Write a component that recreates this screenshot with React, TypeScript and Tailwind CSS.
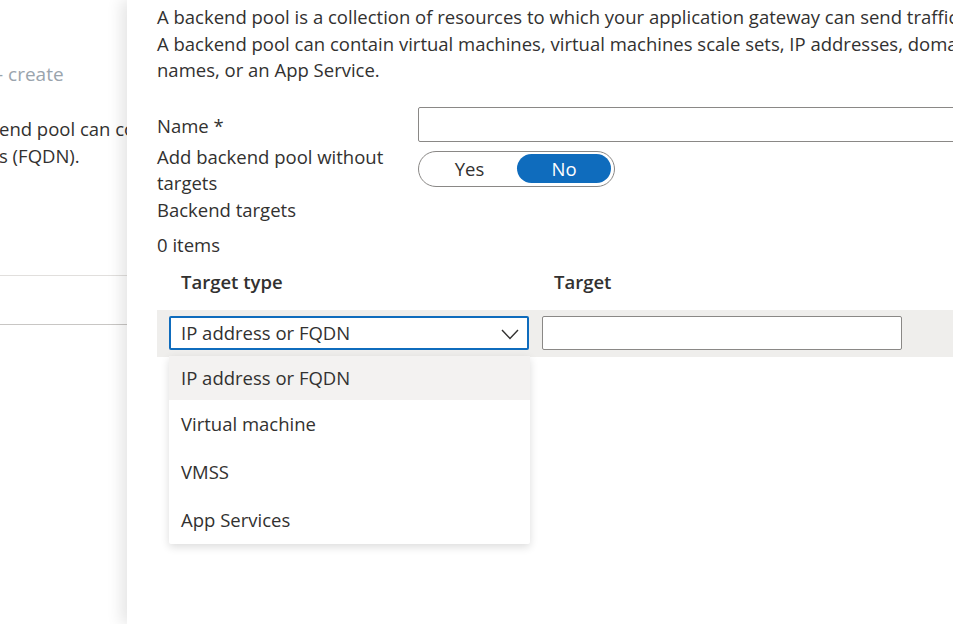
import React from "react";

export default function App() {
  const font = { fontFamily: '"Open Sans", "Noto Sans", "Liberation Sans", sans-serif' };
  return (
    <div
      className="w-[953px] h-[624px] flex overflow-hidden bg-white text-[#323130] text-[18.5px]"
      style={font}
    >
      {/* Left, background blade */}
      <div className="w-[127px] shrink-0 h-full overflow-hidden bg-white flex flex-col">
        <div className="h-[60px]" />
        <div className="whitespace-nowrap ml-[-3px] text-[19px] leading-[28px] text-[#9aa4ad]">
          - create
        </div>
        <div className="h-[27px]" />
        <div className="whitespace-nowrap ml-[-1px] leading-[27px]">end pool can contain</div>
        <div className="whitespace-nowrap ml-[-1px] leading-[27px]">s (FQDN).</div>
        <div className="h-[106px]" />
        <div className="h-px bg-[#e1dfdd] w-full" />
        <div className="h-[48px]" />
        <div className="h-px bg-[#c8c6c4] w-full" />
      </div>

      {/* Right, active blade */}
      <div className="relative flex-1 h-full bg-white shadow-[-6px_0_14px_rgba(0,0,0,0.10)]">
        <div className="pl-[30px] pt-[4px]">
          <p className="leading-[26.5px] whitespace-nowrap">
            A backend pool is a collection of resources to which your application gateway can send traffic.
            <br />
            A backend pool can contain virtual machines, virtual machines scale sets, IP addresses, domain
            <br />
            names, or an App Service.
          </p>

          {/* Name */}
          <div className="flex items-center mt-[23px] h-[35px]">
            <div className="w-[261px] shrink-0 leading-[26px] translate-y-[2px]">Name *</div>
            <div className="flex-1 h-[35px] border border-[#8a8886] rounded-[2px] mr-[-10px]" />
          </div>

          {/* Toggle row */}
          <div className="flex mt-[2px]">
            <div className="w-[261px] shrink-0 leading-[26px] pr-[20px]">
              Add backend pool without targets
            </div>
            <div className="mt-[7px] w-[197px] h-[36px] rounded-full border border-[#8a8886] flex items-center px-[3px]">
              <div className="flex-1 text-center">Yes</div>
              <div className="w-[94px] h-[29px] rounded-full bg-[#0f6cbd] text-white flex items-center justify-center">
                No
              </div>
            </div>
          </div>

          <div className="leading-[26px] mt-[1px]">Backend targets</div>
          <div className="leading-[26px] mt-[9px]">0 items</div>

          {/* Table header */}
          <div className="flex mt-[11px] h-[26px] items-center font-semibold">
            <div className="w-[397px] pl-[24px]">Target type</div>
            <div>Target</div>
          </div>
        </div>

        {/* Row band */}
        <div className="ml-[30px] mt-[15px] h-[47px] bg-[#efeeec] flex items-center pl-[12px] gap-[13px]">
          <div className="relative w-[360px] h-[34px] border-2 border-[#0f6cbd] rounded-[2px] bg-white flex items-center pl-[10px]">
            <span>IP address or FQDN</span>
            <svg
              className="absolute right-[8px] top-[11px]"
              width="18"
              height="11"
              viewBox="0 0 18 11"
              fill="none"
            >
              <polyline points="1,1 9,9.5 17,1" stroke="#323130" strokeWidth="1.4" />
            </svg>
          </div>
          <div className="w-[360px] h-[34px] border border-[#8a8886] rounded-[2px] bg-white" />
        </div>

        {/* Dropdown */}
        <div className="absolute left-[42px] top-[356px] w-[361px] bg-white rounded-b-[2px] shadow-[0_3px_8px_rgba(0,0,0,0.14)]">
          <div className="h-[44px] flex items-center pl-[12px] bg-[#f3f2f1]">IP address or FQDN</div>
          <div className="h-[48px] flex items-center pl-[12px]">Virtual machine</div>
          <div className="h-[48px] flex items-center pl-[12px]">VMSS</div>
          <div className="h-[48px] flex items-center pl-[12px]">App Services</div>
        </div>
      </div>
    </div>
  );
}
